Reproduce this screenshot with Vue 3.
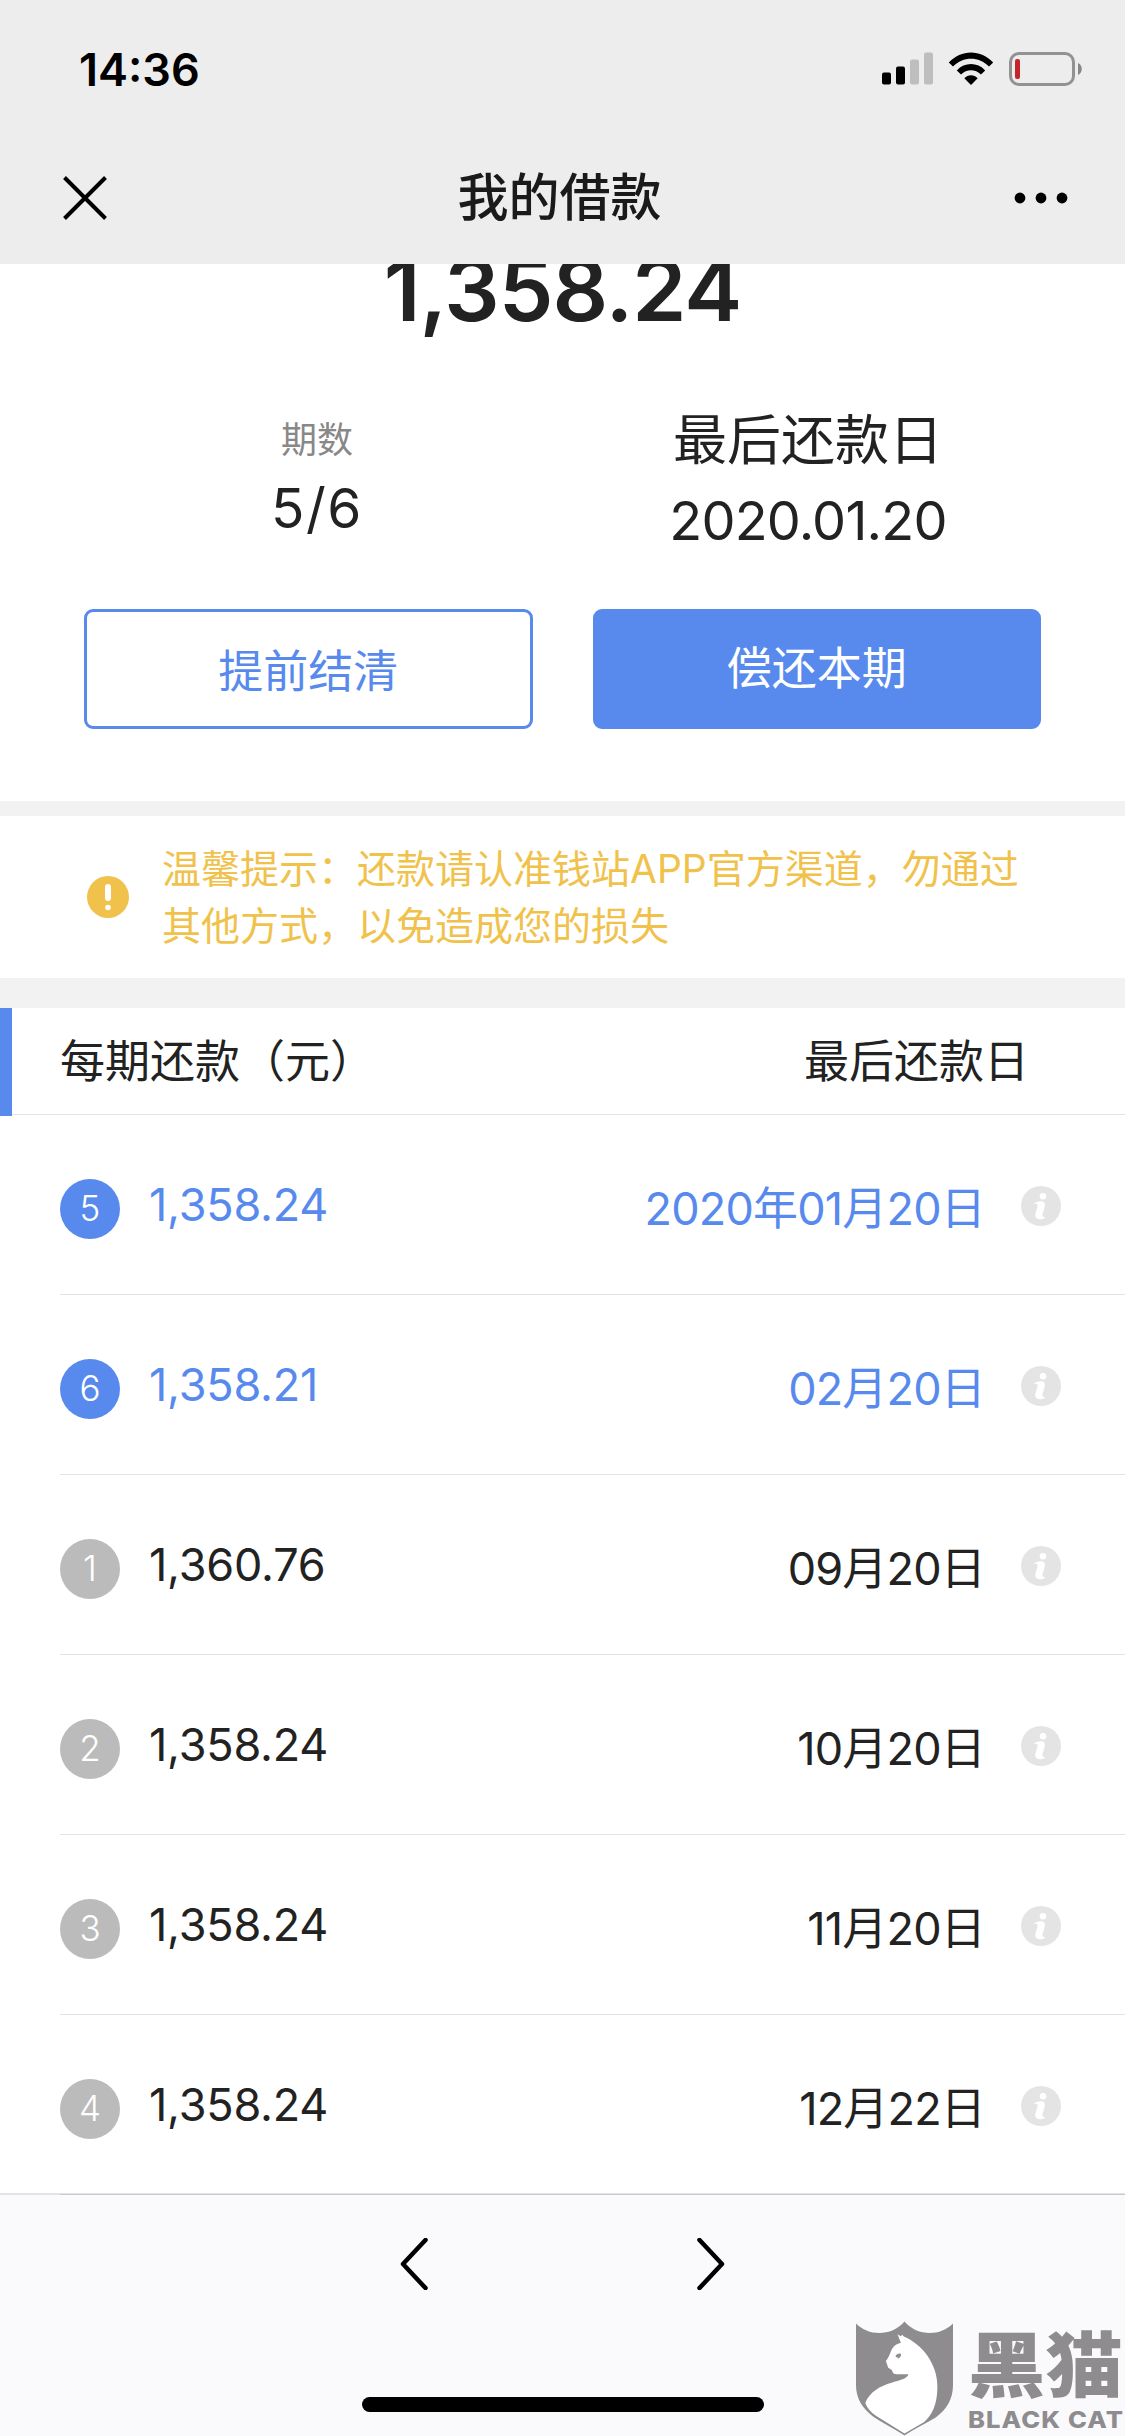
<template>
  <div class="page">
    <header class="top">
      <div class="status-bar">
        <span class="time">14:36</span>
        <div class="status-icons">
          <svg class="signal" viewBox="0 0 51 33">
            <rect x="0" y="20.5" width="9" height="12" rx="2" />
            <rect x="14" y="14.5" width="9" height="18" rx="2" />
            <rect class="off" x="28" y="7.5" width="9" height="25" rx="2" />
            <rect class="off" x="42" y="0.5" width="9" height="32" rx="2" />
          </svg>
          <svg class="wifi" viewBox="0 0 46 34">
            <path d="M0.8 10.6 C13 -2.8 33 -2.8 45.2 10.6 L41 14.6 C31 4.2 15 4.2 5 14.6Z" />
            <path d="M8.8 18.4 C16.6 10 29.4 10 37.2 18.4 L33 22.6 C27.4 16.8 18.6 16.8 13 22.6Z" />
            <path d="M16.3 26.2 C20 22.2 26 22.2 29.7 26.2 L23 33Z" />
          </svg>
          <svg class="battery" viewBox="0 0 74 34">
            <rect class="shell" x="1.5" y="1.5" width="63" height="31" rx="8.5" />
            <rect class="charge" x="6" y="7" width="5" height="20" rx="2" />
            <path class="cap" d="M69 11 C74 13 74 21 69 23Z" />
          </svg>
        </div>
      </div>
      <div class="nav-bar">
        <svg class="close" viewBox="0 0 44 44">
          <path d="M1.5 1.5 L42.5 42.5 M42.5 1.5 L1.5 42.5" />
        </svg>
        <h1 class="title">我的借款</h1>
        <svg class="more" viewBox="0 0 54 12">
          <circle cx="6" cy="6" r="5.4" />
          <circle cx="27" cy="6" r="5.4" />
          <circle cx="48" cy="6" r="5.4" />
        </svg>
      </div>
    </header>

    <section class="summary">
      <div class="total">1,358.24</div>
      <div class="facts">
        <div class="fact">
          <div class="fact-label">期数</div>
          <div class="fact-value">5/6</div>
        </div>
        <div class="fact due">
          <div class="fact-label">最后还款日</div>
          <div class="fact-value">2020.01.20</div>
        </div>
      </div>
      <div class="actions">
        <button class="btn outline">提前结清</button>
        <button class="btn solid">偿还本期</button>
      </div>
    </section>

    <section class="notice">
      <svg class="warn" viewBox="0 0 42 42">
        <circle cx="21" cy="21" r="21" />
        <rect x="18" y="8" width="6" height="17" rx="3" />
        <circle class="dot" cx="21" cy="31.5" r="2.8" />
      </svg>
      <p>温馨提示：还款请认准钱站APP官方渠道，勿通过<br />其他方式，以免造成您的损失</p>
    </section>

    <section class="plan">
      <div class="plan-head">
        <span>每期还款（元）</span>
        <span>最后还款日</span>
      </div>
      <ul class="rows">
        <li v-for="item in items" :key="item.no" class="row" :class="{ active: item.active }">
          <span class="no">{{ item.no }}</span>
          <span class="amount">{{ item.amount }}</span>
          <span class="date">{{ item.date }}</span>
          <svg class="info" viewBox="0 0 40 40">
            <circle cx="20" cy="20" r="20" />
            <circle class="mark" cx="22" cy="10.2" r="3.3" />
            <path
              class="mark"
              d="M12 17.8 C14.5 15.8 18 15 20.5 15.2 C23.3 15.4 24.4 17.2 23.8 20 L21.5 28.4 C21 30.4 22.5 31.2 25 31.2 C22.5 33.2 18.5 33.8 16.5 32.8 C14.2 31.8 13.9 29.5 14.6 27 L16.6 20.4 C17.2 18 15.2 17.2 12 17.8Z"
            />
          </svg>
        </li>
      </ul>
    </section>

    <footer class="toolbar">
      <div class="arrows">
        <svg viewBox="0 0 28 52"><path d="M25.5 2 L3 26 L25.5 50" /></svg>
        <svg viewBox="0 0 28 52"><path d="M2.5 2 L25 26 L2.5 50" /></svg>
      </div>
      <div class="home-bar"></div>
    </footer>

    <div class="watermark">
      <svg class="shield" viewBox="108 93 292 343">
        <path
          d="M108 99 C146 138 216 138 254 93 C292 138 362 138 400 99 V285 C400 330 378 360 348 382 C320 400 285 415 254 436 C222 415 190 400 160 380 C128 355 108 325 108 285Z"
        />
        <path
          class="cat"
          d="M233 131 L243 137 L247 133 L252 138 C305 160 355 220 353 292 C352 340 340 372 312 396 L254 430 L168 377 C152 365 141 352 136 338 C148 305 182 286 215 277 C246 269 262 264 266 252 C250 250 236 254 222 250 C218 246 218 242 215 238 L205 232 L198 212 C212 196 210 180 224 166 C232 160 238 160 243 157Z"
        />
        <path d="M227 197 C230 191 237 188 243 190 C245 197 241 203 233 205 C236 200 234 197 232 202 C229 201 228 199 227 197Z" />
      </svg>
      <div class="brand">
        <span class="brand-cn">黑猫</span>
        <span class="brand-en">BLACK CAT</span>
      </div>
    </div>
  </div>
</template>

<script setup>
import { ref } from 'vue';

const items = ref([
  { no: 5, amount: '1,358.24', date: '2020年01月20日', active: true },
  { no: 6, amount: '1,358.21', date: '02月20日', active: true },
  { no: 1, amount: '1,360.76', date: '09月20日' },
  { no: 2, amount: '1,358.24', date: '10月20日' },
  { no: 3, amount: '1,358.24', date: '11月20日' },
  { no: 4, amount: '1,358.24', date: '12月22日' }
]);
</script>

<style>
body {
  margin: 0;
  background: #fff;
}
</style>

<style scoped>
.page {
  position: relative;
  display: flex;
  flex-direction: column;
  width: 1125px;
  height: 2436px;
  overflow: hidden;
  background: #fff;
  color: #222;
  font-family: Inter, 'Noto Sans CJK SC', sans-serif;
  font-size: 45px;
  font-weight: 380;
}

.page > * {
  flex: none;
}

svg {
  display: block;
  flex: none;
}

/* status bar + nav */
.top {
  position: relative;
  z-index: 1;
  height: 264px;
  background: #ededed;
}

.status-bar {
  display: flex;
  justify-content: space-between;
  height: 132px;
  box-sizing: border-box;
  padding: 0 42px 0 79px;
}

.time {
  height: 139px;
  line-height: 139px;
  color: #000;
  font-size: 45px;
  font-weight: 600;
}

.status-icons {
  display: flex;
  padding-top: 52px;
}

.signal {
  width: 51px;
  height: 33px;
}

.signal .off {
  fill: #bebebe;
}

.wifi {
  width: 46px;
  height: 34px;
  margin-left: 15px;
}

.battery {
  width: 74px;
  height: 34px;
  margin-left: 15px;
}

.shell {
  fill: none;
  stroke: #929292;
  stroke-width: 3;
}

.charge {
  fill: #c5242a;
}

.cap {
  fill: #868686;
}

.nav-bar {
  display: flex;
  align-items: center;
  justify-content: space-between;
  height: 132px;
  padding: 0 57px 0 63px;
}

.close {
  width: 44px;
  height: 44px;
  stroke: #000;
  stroke-width: 4;
}

.title {
  margin: 0 0 0 -2px;
  color: #1a1a1a;
  font-size: 51px;
  font-weight: 500;
  line-height: 134px;
}

.more {
  width: 54px;
  height: 12px;
}

/* current bill */
.summary {
  height: 537px;
}

.total {
  margin-top: -35px;
  height: 122px;
  line-height: 122px;
  font-size: 87px;
  font-weight: 570;
  letter-spacing: -0.9px;
  text-align: center;
}

.facts {
  display: grid;
  grid-template-columns: 449px 449px;
  gap: 60px;
  height: 258px;
  padding: 0 84px;
  text-align: center;
}

.fact {
  width: 466px;
}

.fact-label {
  padding-top: 59px;
  color: #888;
  font-size: 36px;
  line-height: 60px;
}

.fact-value {
  padding-top: 8px;
  font-size: 55px;
  line-height: 60px;
  letter-spacing: 1.6px;
}

.due {
  width: 430px;
}

.due .fact-label {
  padding-top: 60px;
  color: #222;
  font-size: 54px;
}

.due .fact-value {
  padding-top: 20px;
  font-size: 54px;
  letter-spacing: -0.8px;
}

.actions {
  display: flex;
  gap: 60px;
  padding: 0 84px;
}

.btn {
  flex: 1;
  height: 120px;
  box-sizing: border-box;
  border: 3px solid #588aee;
  border-radius: 9px;
  font-family: inherit;
  font-size: 45px;
  font-weight: inherit;
  line-height: 114px;
  padding: 0;
}

.outline {
  background: #fff;
  color: #588aee;
  padding-top: 3px;
}

.solid {
  background: #588aee;
  color: #fff;
}

/* warning */
.notice {
  display: flex;
  align-items: center;
  height: 162px;
  border-top: 15px solid #f2f2f2;
  border-bottom: 30px solid #f2f2f2;
  padding-left: 87px;
  color: #f0c24b;
}

.notice p {
  margin: 0 0 0 33px;
  font-size: 39px;
  line-height: 57px;
  white-space: nowrap;
}

.warn {
  width: 42px;
  height: 42px;
  fill: #f0c24b;
}

.warn rect,
.warn .dot {
  fill: #fff;
}

/* repayment list */
.plan-head {
  position: relative;
  display: flex;
  justify-content: space-between;
  height: 106px;
  line-height: 108px;
  padding: 0 96px 0 60px;
  border-bottom: 1px solid #e3e3e3;
}

.plan-head::before {
  content: '';
  position: absolute;
  left: 0;
  top: 0;
  width: 12px;
  height: 108px;
  background: #588aee;
}

.rows {
  margin: 0;
  padding: 0 0 0 60px;
  list-style: none;
}

.row {
  display: flex;
  align-items: center;
  height: 179px;
  padding-right: 64px;
  border-bottom: 1px solid #e3e3e3;
}

.no {
  width: 60px;
  height: 60px;
  margin-top: 8px;
  border-radius: 50%;
  background: #bbb;
  color: #fff;
  font-size: 35px;
  font-weight: 300;
  line-height: 59px;
  text-align: center;
}

.amount {
  margin-left: 29px;
  letter-spacing: -0.2px;
}

.date {
  margin: 2px 36px 0 auto;
  letter-spacing: -0.8px;
}

.info {
  width: 40px;
  height: 40px;
  margin-top: 3px;
  fill: #e4e4e4;
}

.info .mark {
  fill: #fff;
}

.active .no {
  background: #588aee;
}

.active .amount,
.active .date {
  color: #588aee;
}

/* browser toolbar */
.toolbar {
  position: relative;
  z-index: 1;
  height: 241px;
  margin-top: -2px;
  border-top: 2px solid rgba(0, 0, 0, 0.11);
  background: #fafafc;
  background-clip: padding-box;
}

.arrows {
  display: flex;
  justify-content: center;
  gap: 269px;
  padding-top: 43px;
}

.arrows svg {
  width: 28px;
  height: 52px;
  fill: none;
  stroke: #000;
  stroke-width: 4.5;
  stroke-linecap: round;
  stroke-linejoin: round;
}

.home-bar {
  width: 402px;
  height: 15px;
  margin: 107px auto 0;
  border-radius: 8px;
  background: #000;
}

.watermark {
  position: absolute;
  z-index: 2;
  right: 0;
  bottom: 0;
  display: flex;
  width: 269px;
  height: 115px;
  color: #8e8c8f;
}

.shield {
  width: 97px;
  height: 115px;
  fill: #8e8c8f;
}

.shield .cat {
  fill: #fff;
}

.brand {
  display: flex;
  flex-direction: column;
  margin-left: 15px;
  white-space: nowrap;
}

.brand-cn,
.brand-en {
  transform-origin: 0 50%;
}

.brand-cn {
  height: 84px;
  font-size: 71px;
  font-weight: 900;
  line-height: 88px;
  transform: scaleX(1.09);
}

.brand-en {
  height: 28px;
  font-size: 23px;
  font-weight: 800;
  line-height: 30px;
  letter-spacing: 1px;
  transform: scaleX(1.11);
}
</style>
